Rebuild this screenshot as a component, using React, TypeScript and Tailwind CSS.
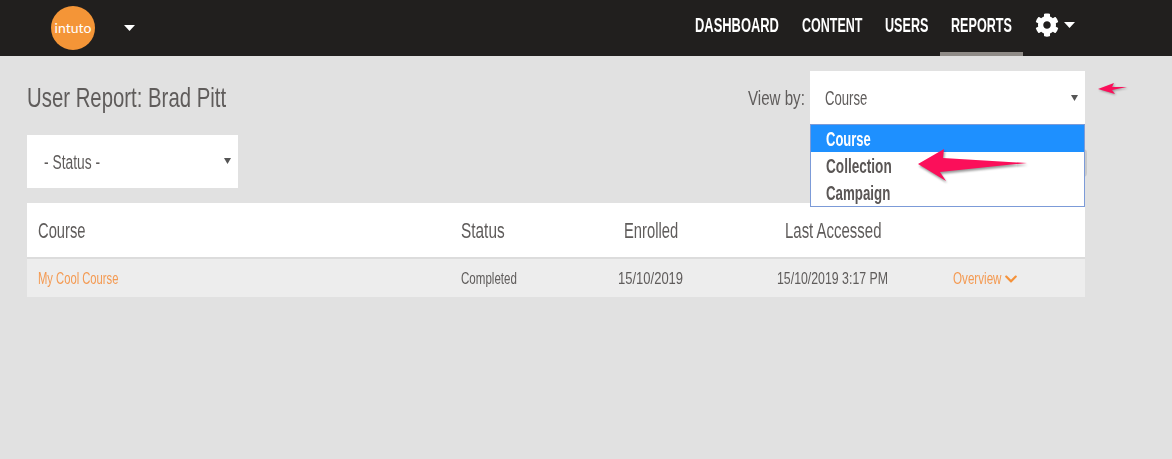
import React from "react"
import { FaCog, FaChevronDown } from "react-icons/fa"

const font = "font-['Liberation_Sans',sans-serif]"

// no condensed family installed, so the text is squeezed sideways in a box of the real width
const Sq = ({ w, s, children }: { w: string; s: string; children: React.ReactNode }) => (
  <span className={`inline-block whitespace-nowrap text-left ${w}`}>
    <span className={`inline-block origin-left ${s}`}>{children}</span>
  </span>
)

const Caret = ({ className }: { className: string }) => (
  <svg viewBox="0 0 10 6" preserveAspectRatio="none" className={className}>
    <path d="M0 0h10L5 6z" fill="currentColor" />
  </svg>
)

export default function App() {
  return (
    <div className={`relative h-[459px] w-[1172px] overflow-hidden bg-[#e1e1e1] text-[#5f5c5b] ${font}`}>
      <header className="flex h-14 items-center bg-[#211f1e] pl-[51px] pr-[97px]">
        <div className="flex h-11 w-11 items-center justify-center rounded-full bg-[#f49537] pb-0.5 font-['Lato',sans-serif] text-[14px] font-normal text-white">
          intuto
        </div>
        <Caret className="ml-[29px] h-[6px] w-[11px] text-white" />
        <nav className="ml-auto flex h-full items-center text-[21px] font-bold text-white">
          <a className="flex h-full items-center px-[11px] pb-[6px]">
            <Sq w="w-[85px]" s="scale-x-[0.615]">DASHBOARD</Sq>
          </a>
          <a className="flex h-full items-center px-[11px] pb-[6px]">
            <Sq w="w-[61px]" s="scale-x-[0.595]">CONTENT</Sq>
          </a>
          <a className="flex h-full items-center px-[11px] pb-[6px]">
            <Sq w="w-[44px]" s="scale-x-[0.6]">USERS</Sq>
          </a>
          <a className="flex h-full items-center border-b-4 border-[#8f8b87] px-[11px] pb-[2px]">
            <Sq w="w-[61px]" s="scale-x-[0.6]">REPORTS</Sq>
          </a>
          <span className="mb-[6px] ml-[12px] flex items-center gap-[5px]">
            <FaCog className="h-[24px] w-[24px] text-white" />
            <Caret className="h-[6px] w-[11px] text-white" />
          </span>
        </nav>
      </header>

      <main className="w-[1085px] pl-[27px]">
        <div className="flex h-[79px] items-start justify-between pt-[15px]">
          <h1 className="mt-[9px] text-[28px] leading-[36px] font-normal">
            <Sq w="w-[199px]" s="scale-x-[0.727]">User Report: Brad Pitt</Sq>
          </h1>
          <div className="flex items-start">
            <label className="mt-[15px] mr-[5px] text-[21px] leading-6">
              <Sq w="w-[57px]" s="scale-x-[0.72]">View by:</Sq>
            </label>
            <div className="relative flex h-[53px] w-[275px] items-center justify-between bg-white pr-[7px] pl-[15px] text-[20px]">
              <Sq w="w-[42px]" s="scale-x-[0.656]">Course</Sq>
              <Caret className="h-[6px] w-[7px] text-[#555]" />
            </div>
          </div>
        </div>

        <div className="flex h-[53px] w-[211px] items-center justify-between bg-white pr-[7px] pl-[17px] text-[20px]">
          <Sq w="w-[56px]" s="scale-x-[0.69]">- Status -</Sq>
          <Caret className="mb-0.5 h-[6px] w-[7px] text-[#555]" />
        </div>

        <table className="mt-[15px] w-full table-fixed border-collapse">
          <thead>
            <tr className="h-[55px] bg-white text-[22px]">
              <th className="w-[423px] pl-[11px] text-left font-normal">
                <Sq w="w-[47px]" s="scale-x-[0.67]">Course</Sq>
              </th>
              <th className="w-[130px] pl-[11px] text-left font-normal">
                <Sq w="w-[43px]" s="scale-x-[0.7]">Status</Sq>
              </th>
              <th className="w-[140px] text-center font-normal">
                <Sq w="w-[53px]" s="scale-x-[0.67]">Enrolled</Sq>
              </th>
              <th className="w-[224px] text-center font-normal">
                <Sq w="w-[95px]" s="scale-x-[0.68]">Last Accessed</Sq>
              </th>
              <th />
            </tr>
          </thead>
          <tbody>
            <tr className="h-[39px] border-t-2 border-[#dcdcdc] bg-[#ededed] text-[17px]">
              <td className="pt-[2px] pl-[11px] text-[#f49a52]">
                <Sq w="w-[81px]" s="scale-x-[0.66]">My Cool Course</Sq>
              </td>
              <td className="pt-[2px] pl-[11px]">
                <Sq w="w-[56px]" s="scale-x-[0.68]">Completed</Sq>
              </td>
              <td className="pt-[2px] text-center">
                <Sq w="w-[65px]" s="scale-x-[0.765]">15/10/2019</Sq>
              </td>
              <td className="pt-[2px] text-center">
                <Sq w="w-[111px]" s="scale-x-[0.725]">15/10/2019 3:17 PM</Sq>
              </td>
              <td className="pt-[2px] pl-[9px] text-[#f49a52]">
                <span className="inline-flex items-center gap-[3px]">
                  <Sq w="w-[48px]" s="scale-x-[0.685]">Overview</Sq>
                  <FaChevronDown className="h-[14px] w-[14px] text-[#f5923a]" />
                </span>
              </td>
            </tr>
          </tbody>
        </table>
      </main>

      {/* button hidden behind the open list */}
      <div className="absolute top-[149px] left-[1060px] h-[28px] w-[27px] rounded-r bg-[#c9c9c9]" />

      {/* open select list */}
      <ul className="absolute top-[124px] left-[810px] h-[83px] w-[275px] border border-[#7c9bd8] bg-white text-[20px] leading-[29px] font-bold text-[#5a5655]">
        <li className="h-[27px] bg-[#1e90ff] pl-[15px] text-white">
          <Sq w="w-[45px]" s="scale-x-[0.65]">Course</Sq>
        </li>
        <li className="h-[27px] pl-[15px]">
          <Sq w="w-[65px]" s="scale-x-[0.68]">Collection</Sq>
        </li>
        <li className="h-[27px] pl-[15px]">
          <Sq w="w-[64px]" s="scale-x-[0.665]">Campaign</Sq>
        </li>
      </ul>

      {/* annotation arrows */}
      <svg viewBox="0 0 30 12" className="absolute top-[83px] left-[1098px] h-3 w-[30px] drop-shadow-[1px_1px_1px_rgba(0,0,0,0.35)]">
        <path d="M0 6 16 0 14 4 29 4 14 7 17 11z" fill="#fb0f5a" />
      </svg>
      <svg viewBox="0 0 110 33" className="absolute top-[149px] left-[918px] h-[33px] w-[110px] drop-shadow-[1px_2px_1px_rgba(0,0,0,0.4)]">
        <path d="M0 15 26 0 25 9 109 14 22 23 28 32z" fill="#fb0f5a" />
      </svg>
    </div>
  )
}
